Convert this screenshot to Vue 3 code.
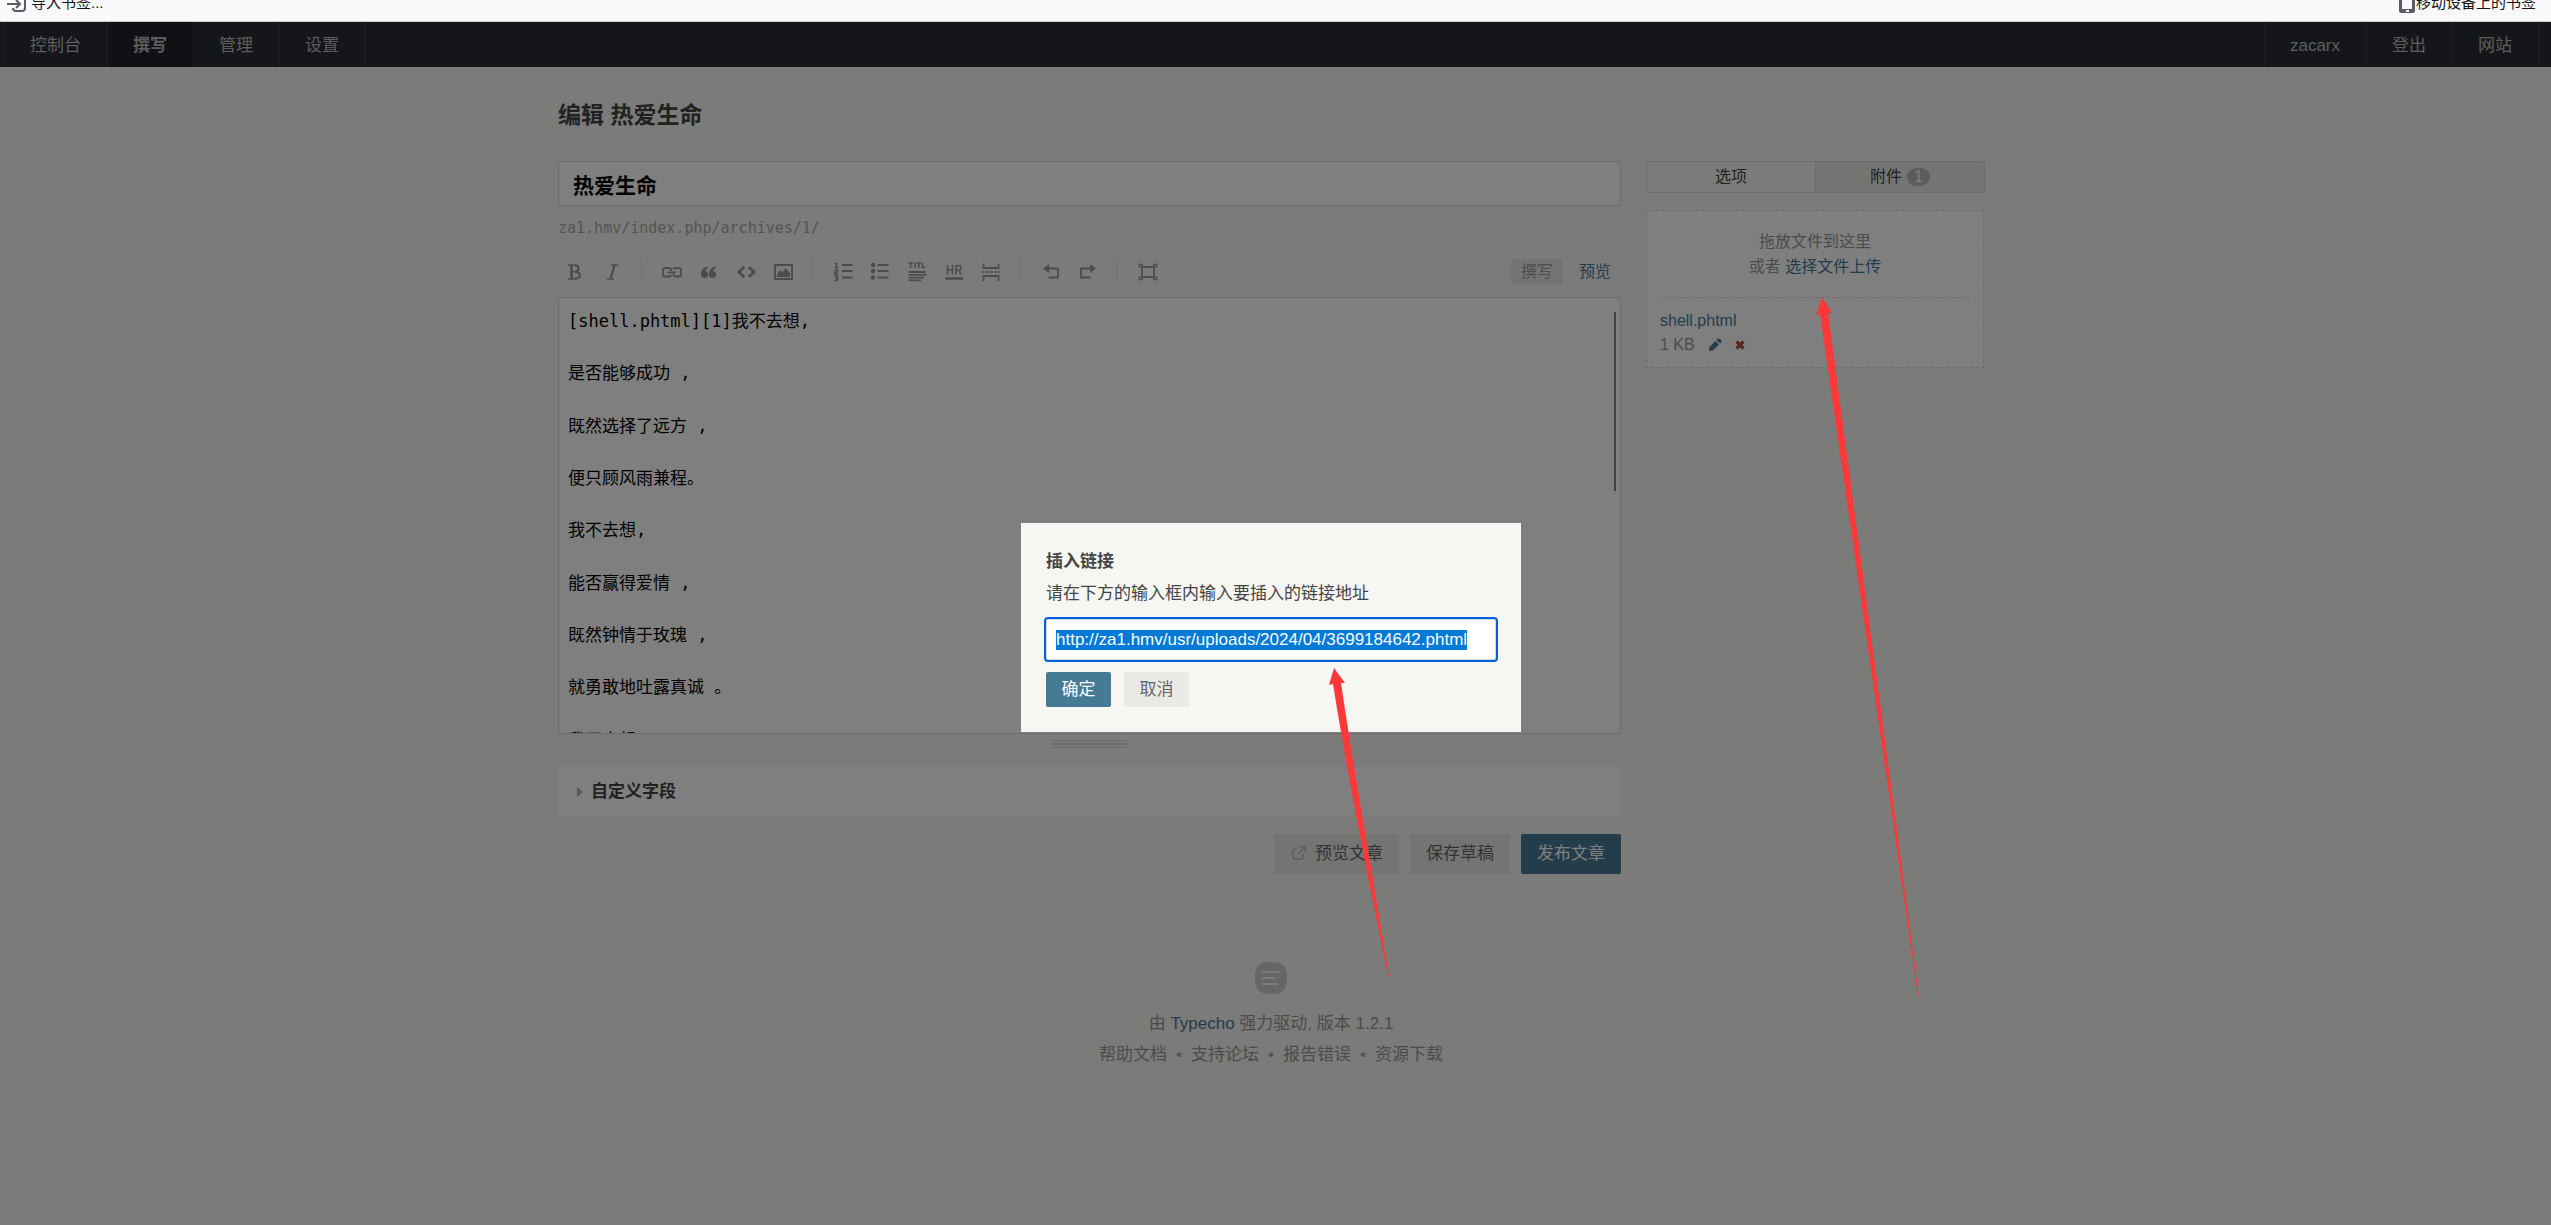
<script setup>
import { onMounted, ref } from 'vue'

const leftNav = [
  { label: '控制台' },
  { label: '撰写', current: true },
  { label: '管理' },
  { label: '设置' },
]
const rightNav = ['zacarx', '登出', '网站']
const footLinks = ['帮助文档', '支持论坛', '报告错误', '资源下载']

const title = ref('热爱生命')
const link = ref('http://za1.hmv/usr/uploads/2024/04/3699184642.phtml')
const body = ref(
  [
    '[shell.phtml][1]我不去想,',
    '是否能够成功 ,',
    '既然选择了远方 ,',
    '便只顾风雨兼程。',
    '我不去想,',
    '能否赢得爱情 ,',
    '既然钟情于玫瑰 ,',
    '就勇敢地吐露真诚 。',
    '我不去想,',
  ].join('\n\n')
)

const linkInput = ref(null)
onMounted(() => {
  linkInput.value.focus({ preventScroll: true })
  linkInput.value.select()
})
</script>

<template>
  <div class="window">
    <div class="bookmarks">
      <a href="#" class="bookmark">
        <svg width="20" height="20" viewBox="0 0 20 20" fill="none" stroke="#5b5b66" stroke-width="2">
          <path d="M0 11H13M9 7L13 11L9 15" />
          <path d="M6 3H15Q18 3 18 6V15Q18 18 15 18H9Q6 18 6 15" />
        </svg>
        导入书签...
      </a>
      <a href="#" class="bookmark mobile">
        <svg width="16" height="20" viewBox="0 0 16 20">
          <rect x="0" y="0" width="16" height="20" rx="2" fill="#5b5b66" />
          <rect x="3" y="2" width="10" height="14" fill="#f9f9fb" />
          <rect x="7" y="17" width="3" height="2" fill="#f9f9fb" />
        </svg>
        移动设备上的书签
      </a>
    </div>

    <div class="page">
      <nav class="topnav">
        <div class="group">
          <a v-for="n in leftNav" :key="n.label" href="#" :class="{ current: n.current }">{{ n.label }}</a>
        </div>
        <div class="group">
          <a v-for="n in rightNav" :key="n" href="#">{{ n }}</a>
        </div>
      </nav>

      <main class="container">
        <h2>编辑 热爱生命</h2>
        <div class="columns">
          <form class="editor" @submit.prevent>
            <input v-model="title" class="title" type="text" aria-label="标题" />
            <p class="slug">za1.hmv/index.php/archives/1/</p>

            <div class="toolbar">
              <div class="tools">
                <button type="button" aria-label="加粗"><svg viewBox="0 0 20 20"><path class="s" stroke-width="2.6" d="M6.500 3V17" /><path class="s" stroke-width="1.4" d="M3 3H10.500M3 17H10.500M7 9.800H10.500" /><path class="s" stroke-width="2.200" d="M10 3.300Q13.500 3.300 13.500 6.500T10 9.800Q14.800 9.800 14.800 13.300T10 16.700" /></svg></button>
                <button type="button" aria-label="斜体"><svg viewBox="0 0 20 20"><path class="s" stroke-width="2.200" d="M12.500 3L8.500 17" /><path class="s" stroke-width="1.400" d="M9 3H16M5 17H12" /></svg></button>
                <span class="sep"></span>
                <button type="button" aria-label="链接"><svg viewBox="0 0 20 20"><path class="s" stroke-width="1.8" d="M9 9V7.500Q9 6 7 6H3Q1 6 1 8V12.500Q1 14.500 3 14.500H7Q9 14.500 9 13M11.500 11.500V13Q11.500 14.500 13.500 14.500H17Q19 14.500 19 12.500V8Q19 6 17 6H13.500Q11.500 6 11.500 7.500M6 10.300H14" /></svg></button>
                <button type="button" aria-label="引用"><svg viewBox="0 0 20 20"><path class="f" d="M8.500 4.500Q2 6 2 12.500A3.600 3.600 0 1 0 6 8.800Q6.500 7 9 6ZM16.500 4.500Q10 6 10 12.500A3.600 3.600 0 1 0 14 8.800Q14.500 7 17 6Z" /></svg></button>
                <button type="button" aria-label="代码"><svg viewBox="0 0 20 20"><path class="s" stroke-width="3" d="M8 5L3 10L8 15M13 5L18 10L13 15" /></svg></button>
                <button type="button" aria-label="图片"><svg viewBox="0 0 20 20"><path class="s" stroke-width="1.800" d="M2 3H19V17H2Z" /><path class="f" d="M4 15V12L7.500 8L9.500 10.500L12.500 6L17 11V15Z" /></svg></button>
                <span class="sep"></span>
                <button type="button" aria-label="数字列表"><svg viewBox="0 0 20 20"><path class="s" stroke-width="2" d="M9 3H19.500M9 9H19.500M9 15.500H19.500" /><path class="s" stroke-width="1.600" d="M1.500 1.500H3.500V5M1.500 5.500H5M1.500 8H4.500V10H2V12H5M1.500 14H4.500V18.500H1.500M2 16.200H4" /></svg></button>
                <button type="button" aria-label="普通列表"><svg viewBox="0 0 20 20"><path class="s" stroke-width="2" d="M7.500 3H18.500M7.500 9H18.500M7.500 15.500H18.500" /><circle class="f" cx="3" cy="3" r="2.200" /><circle class="f" cx="3" cy="9" r="2.200" /><circle class="f" cx="3" cy="15.500" r="2.200" /></svg></button>
                <button type="button" aria-label="标题"><svg viewBox="0 0 20 20"><path class="s" stroke-width="1.500" d="M1.500 1H6M3.700 1V6M8 0.500V6M9.500 1H14M11.700 1V6M15.500 0.500V5.500H18.500" /><path class="s" stroke-width="1.800" d="M1.500 10H18.500M1.500 12.800H19.500M1.500 15.600H17M1.500 18.400H14" /></svg></button>
                <button type="button" aria-label="分割线"><svg viewBox="0 0 20 20"><path class="s" stroke-width="1.600" d="M3.500 3V12.500M8.500 3V12.500M3.500 8H8.500M12 12.500V3.700H15.500Q17 3.700 17 6T15.500 8H12M15 8L17 12.500" /><path class="s" stroke-width="2.500" d="M1.500 16.500H19" /></svg></button>
                <button type="button" aria-label="摘要分割线"><svg viewBox="0 0 20 20"><path class="s" stroke-width="1.800" d="M2.500 1.500V6H17.500V1.500M2.500 19V14H17.500V19" /><path class="s" stroke-width="1.700" stroke-dasharray="3 1.200" d="M0.500 10H19.500" /></svg></button>
                <span class="sep"></span>
                <button type="button" aria-label="撤销"><svg viewBox="0 0 20 20"><path class="f" d="M2 6.500L8 2V11Z" /><path class="s" stroke-width="1.800" d="M7 6.500H17V15.500H7.500" /></svg></button>
                <button type="button" aria-label="重做"><svg viewBox="0 0 20 20"><path class="f" d="M18 6.500L12 2V11Z" /><path class="s" stroke-width="1.800" d="M13 6.500H3V15.500H12.500" /></svg></button>
                <span class="sep"></span>
                <button type="button" aria-label="全屏"><svg viewBox="0 0 20 20"><path class="s" stroke-width="1.800" d="M4 5H16V15H4Z" /><path class="s" stroke-width="1.600" d="M1.500 5.500V2.500H5M15 2.500H18.500V5.500M18.500 14.500V17.500H15M5 17.500H1.500V14.500" /></svg></button>
              </div>
              <div class="modes">
                <a href="#" class="active">撰写</a>
                <a href="#">预览</a>
              </div>
            </div>

            <div class="textwrap">
              <textarea v-model="body" aria-label="文章内容" spellcheck="false"></textarea>
              <span class="scroll"></span>
            </div>
            <div class="resize"><i></i></div>

            <section class="fields">
              <a href="#"><i class="caret"></i>自定义字段</a>
            </section>

            <div class="submit">
              <button type="button" class="btn">
                <svg class="ext" width="14" height="14" viewBox="0 0 14 14" fill="none" stroke="#bbb" stroke-width="1.500">
                  <path d="M5 3H3Q1 3 1 5V11Q1 13 3 13H9Q11 13 11 11V8M8 1H13V6M13 1L6 8" />
                </svg>预览文章
              </button>
              <button type="button" class="btn">保存草稿</button>
              <button type="submit" class="btn primary">发布文章</button>
            </div>
          </form>

          <aside>
            <div class="tabs">
              <a href="#">选项</a>
              <a href="#" class="active">附件 <span class="balloon">1</span></a>
            </div>
            <div class="upload">
              <p class="drop">拖放文件到这里<br />或者 <a href="#">选择文件上传</a></p>
              <div class="file">
                <a href="#">shell.phtml</a>
                <div class="info">
                  1 KB
                  <a href="#" aria-label="编辑"><svg width="14" height="14" viewBox="0 0 14 14"><path fill="#467b96" d="M1 13L1.500 9L7.500 3L11 6.500L5 12.500ZM8.500 2L10 0.500Q11 0 12.500 1.500T13.500 4L12 5.500Z" /></svg></a>
                  <a href="#" aria-label="删除"><svg width="10" height="10" viewBox="0 0 10 10"><path stroke="#b94a48" stroke-width="3.200" d="M1.500 1.500L8.500 8.500M8.500 1.500L1.500 8.500" /></svg></a>
                </div>
              </div>
            </div>
          </aside>
        </div>
      </main>

      <footer>
        <svg width="32" height="32" viewBox="0 0 32 32">
          <path fill="#cdcdca" d="M16 0C28 0 32 4 32 16S28 32 16 32S0 28 0 16S4 0 16 0Z" />
          <path stroke="#f6f6f3" stroke-width="2" d="M7 10H25M7 16H20M7 22H23" />
        </svg>
        <p>由 <a href="#">Typecho</a> 强力驱动, 版本 1.2.1</p>
        <p class="links">
          <template v-for="(l, i) in footLinks" :key="l">
            <span v-if="i" class="dot">•</span><a href="#">{{ l }}</a>
          </template>
        </p>
      </footer>

      <div class="overlay">
        <form class="dialog" role="dialog" aria-labelledby="dlg-title" @submit.prevent>
          <p id="dlg-title"><b>插入链接</b></p>
          <label for="link-url">请在下方的输入框内输入要插入的链接地址</label>
          <input id="link-url" ref="linkInput" v-model="link" type="text" spellcheck="false" />
          <div class="actions">
            <button type="submit" class="primary">确定</button>
            <button type="button">取消</button>
          </div>
        </form>
      </div>

      <svg class="arrow one" width="64" height="310" viewBox="0 0 64 310">
        <path fill="#fd3838" d="M6 0L17 15L13 15C27 110 46 215 61 308L60 308C41 215 20 110 5 16L1 17Z" />
      </svg>
      <svg class="arrow two" width="106" height="702" viewBox="0 0 106 702">
        <path fill="#fd3838" d="M6 0L16 16L12 16L103 699L102 699L4 17L0 18Z" />
      </svg>
    </div>
  </div>
</template>

<style>
body {
  margin: 0;
  background: #7b7b79;
}
</style>

<style scoped>
.window {
  display: flex;
  flex-direction: column;
  min-height: 100vh;
  font: 17px/26px "Liberation Sans", "Noto Sans CJK SC", sans-serif;
  color: #444;
  overflow: hidden;
}
.window * {
  box-sizing: border-box;
}
a {
  color: #467b96;
  text-decoration: none;
}
p {
  margin: 0;
}
button,
input,
textarea {
  font: inherit;
}
.bookmarks {
  display: flex;
  justify-content: space-between;
  align-items: flex-end;
  height: 22px;
  padding: 0 15px 8px 7px;
  background: #f9f9fb;
  border-bottom: 1px solid #ccc;
  overflow: hidden;
}
.bookmark {
  display: flex;
  align-items: center;
  gap: 4px;
  font-size: 15px;
  line-height: 20px;
  color: #15141a;
}
.bookmark.mobile {
  gap: 1px;
}
.page {
  position: relative;
  flex: 1;
  padding-right: 8px;
  background: #f6f6f3;
}
.topnav {
  display: flex;
  justify-content: space-between;
  margin-right: -8px;
  padding: 0 12px 0 4px;
  background: #292d33;
}
.group {
  display: flex;
  border-right: 1px solid #383d45;
}
.group a {
  padding: 2px 26px 0 25px;
  border-left: 1px solid #383d45;
  line-height: 43px;
  color: #bbb;
}
.group .current {
  background: #202328;
  font-weight: bold;
}
.container {
  max-width: 1427px;
  margin: 0 auto;
}
h2 {
  margin: 0;
  padding: 33px 0 30px;
  font-size: 23px;
  line-height: 31px;
}
.columns {
  display: grid;
  grid-template-columns: minmax(0, 1fr) 339px;
  align-items: start;
  gap: 25px;
}
.title {
  display: block;
  width: 100%;
  height: 45px;
  padding: 0 14px;
  border: 1px solid #d9d9d6;
  border-radius: 2px;
  background: #fff;
  font-size: 21px;
  font-weight: bold;
}
.slug {
  margin: 9px 0;
  font: 15px/26px "DejaVu Sans Mono", monospace;
  color: #aaa;
}
.toolbar {
  display: flex;
  justify-content: space-between;
  align-items: center;
  height: 47px;
  padding-bottom: 4px;
}
.tools {
  display: flex;
  align-items: center;
  height: 25px;
  margin-left: -2px;
}
.tools button {
  width: 37px;
  height: 25px;
  padding: 0;
  border: 0;
  background: none;
}
.tools svg {
  display: block;
  width: 20px;
  height: 20px;
  margin: auto;
}
.s {
  fill: none;
  stroke: #999;
}
.f {
  fill: #999;
}
.sep {
  width: 1px;
  height: 25px;
  margin: 0 11px;
  background: #e4e4e1;
}
.modes {
  display: flex;
  font-size: 16px;
  line-height: 25px;
}
.modes a {
  padding: 0 10px;
}
.modes .active {
  margin-right: 6px;
  background: #e9e9e6;
  color: #999;
}
.textwrap {
  position: relative;
}
textarea {
  display: block;
  width: 100%;
  height: 437px;
  padding: 10px 9px 0;
  border: 1px solid #d9d9d6;
  border-radius: 2px;
  background: #fff;
  color: #000;
  font: 17px/1.54 "DejaVu Sans Mono", "Noto Sans CJK SC", monospace;
  resize: none;
  overflow: hidden;
}
.scroll {
  position: absolute;
  top: 15px;
  right: 5px;
  width: 2px;
  height: 179px;
  background: #808080;
}
.resize {
  display: flex;
  justify-content: center;
  height: 32px;
  padding-top: 6px;
}
.resize i {
  width: 75px;
  height: 8px;
  border: solid #d9d9d6;
  border-width: 1px 0;
  background: linear-gradient(#d9d9d6, #d9d9d6) 0 2px / 100% 2px no-repeat;
}
.fields {
  padding: 13px 19px 12px;
  background: #fff;
}
.fields a {
  display: flex;
  align-items: center;
  gap: 8px;
  color: #444;
  font-weight: bold;
}
.caret {
  border: solid transparent;
  border-width: 5px 0 5px 6px;
  border-left-color: #aaa;
}
.submit {
  display: flex;
  justify-content: flex-end;
  gap: 11px;
  margin-top: 17px;
}
.btn {
  height: 40px;
  padding: 0 16px;
  border: 0;
  border-radius: 2px;
  background: #e9e9e6;
  color: #666;
}
.ext {
  margin: 0 9px 0 2px;
  vertical-align: -1px;
}
.primary,
.btn.primary {
  background: #467b96;
  color: #fff;
}
.tabs {
  display: flex;
  height: 32px;
  border: 1px solid #d9d9d6;
  border-radius: 2px;
  font-size: 16px;
}
.tabs a {
  flex: 1;
  display: flex;
  justify-content: center;
  align-items: center;
  gap: 5px;
  color: #444;
}
.tabs .active {
  border-left: 1px solid #d9d9d6;
  background: #e9e9e6;
}
.balloon {
  padding: 0 7px;
  border-radius: 9px;
  background: #b9b9b6;
  color: #fff;
  line-height: 18px;
}
.upload {
  margin: 17px 1px 0 0;
  padding: 0 13px 10px;
  border: 1px dashed #d9d9d6;
  background: #fff;
  font-size: 16px;
  line-height: 25px;
  color: #999;
}
.drop {
  padding: 18px 0;
  border-bottom: 1px dashed #d9d9d6;
  text-align: center;
}
.file {
  padding-top: 11px;
  line-height: 24px;
}
.info {
  display: flex;
  align-items: center;
  gap: 13px;
}
.info a,
.info svg {
  display: block;
}
footer {
  padding: 88px 1px 0 0;
  text-align: center;
  color: #999;
}
footer svg {
  display: block;
  margin: 0 auto 17px;
}
.links {
  display: flex;
  justify-content: center;
  gap: 9px;
  margin-top: 5px;
}
.links a {
  color: #999;
}
.dot {
  color: #aaa;
}
.overlay {
  position: absolute;
  inset: 0;
  display: flex;
  justify-content: center;
  align-items: center;
  padding: 8px 9px 0 0;
  background: rgba(0, 0, 0, 0.5);
}
.dialog {
  width: 500px;
  padding: 26px 25px 25px;
  background: #f6f6f3;
}
.dialog label {
  display: block;
  margin-top: 6px;
}
.dialog input {
  display: block;
  width: 100%;
  height: 41px;
  margin: 12px 0;
  padding: 0 9px;
  border: 1px solid #d9d9d6;
  border-radius: 2px;
  background: #fff;
  color: #444;
  outline: 2px solid #0061e0;
}
.dialog input::selection {
  background: rgba(0, 120, 215, 0.996);
  color: #fff;
}
.actions {
  display: flex;
  gap: 13px;
}
.actions button {
  width: 65px;
  height: 35px;
  padding: 0;
  border: 0;
  border-radius: 2px;
  background: #e9e9e6;
  color: #666;
}
.actions .primary {
  background: #467b96;
  color: #fff;
}
.arrow {
  position: absolute;
  pointer-events: none;
}
.one {
  top: 646px;
  left: calc(50% + 52px);
}
.two {
  top: 275px;
  left: calc(50% + 540px);
}
</style>
